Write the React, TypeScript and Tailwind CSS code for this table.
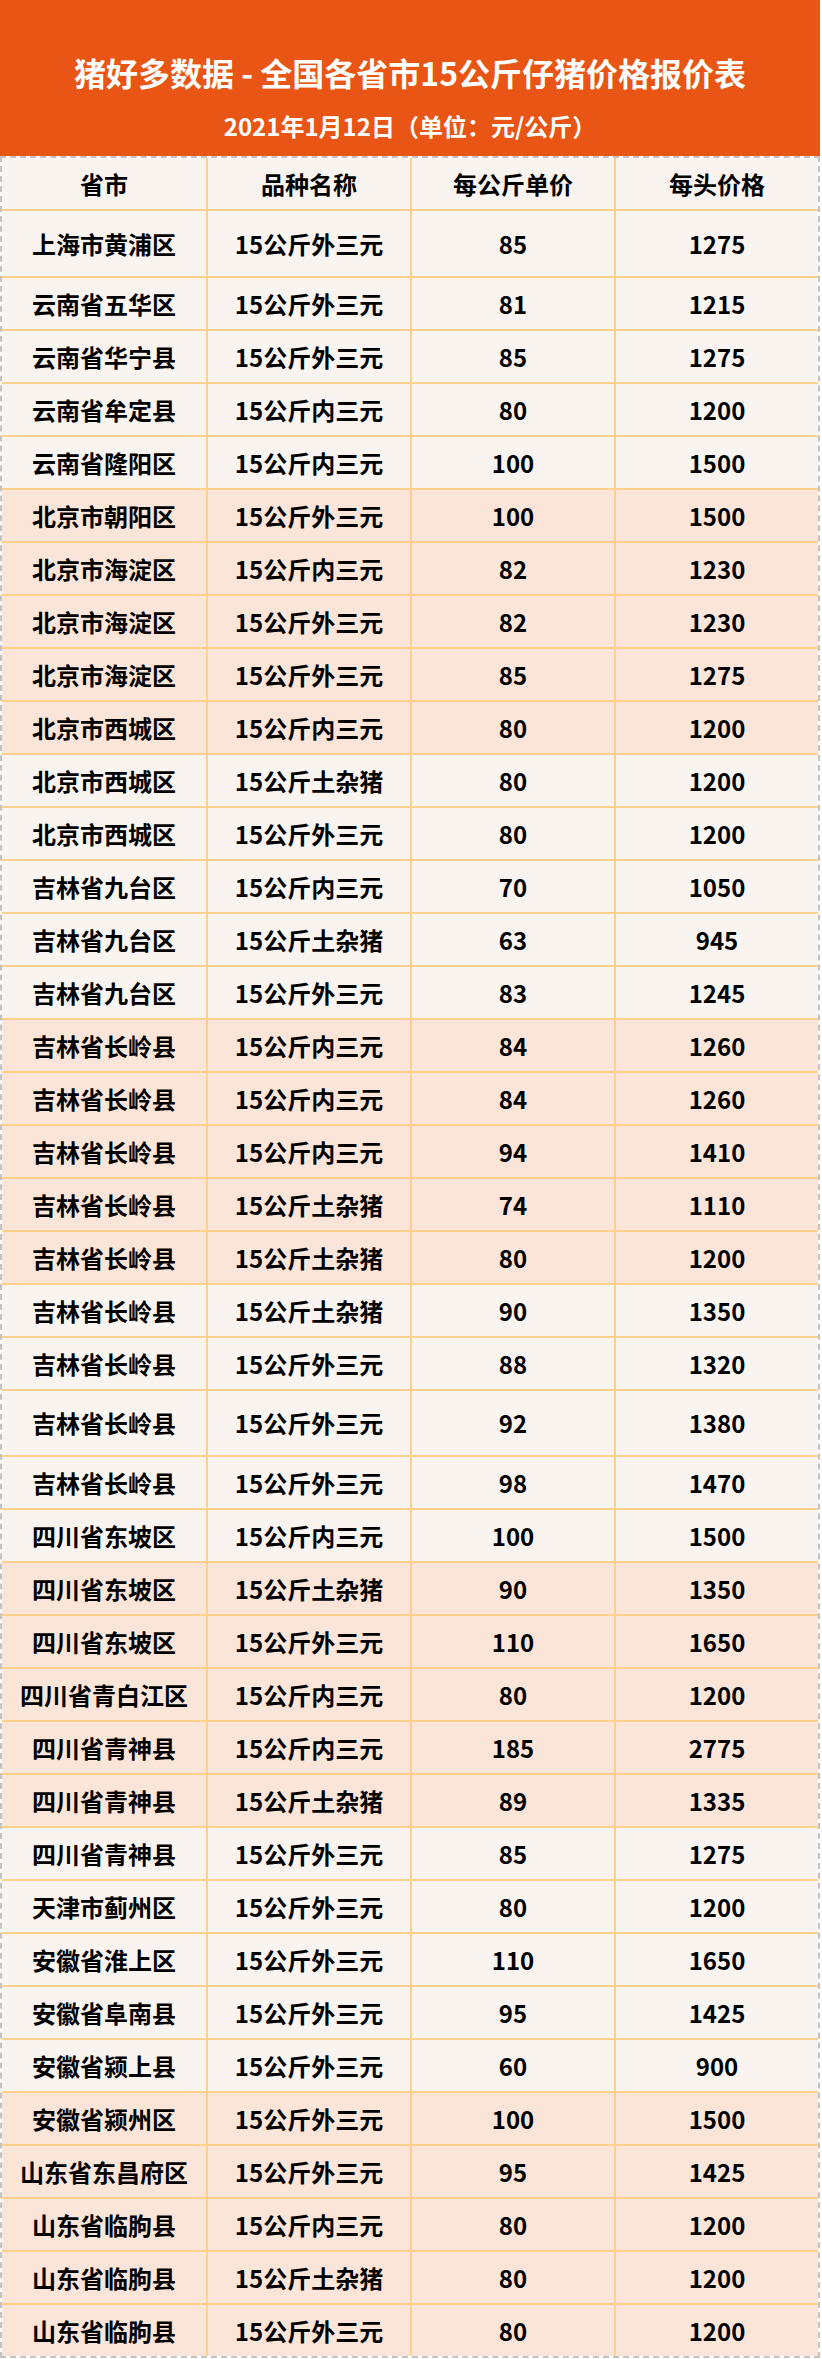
const rows: [string, string, string, string][] = [
  ["上海市黄浦区", "15公斤外三元", "85", "1275"],
  ["云南省五华区", "15公斤外三元", "81", "1215"],
  ["云南省华宁县", "15公斤外三元", "85", "1275"],
  ["云南省牟定县", "15公斤内三元", "80", "1200"],
  ["云南省隆阳区", "15公斤内三元", "100", "1500"],
  ["北京市朝阳区", "15公斤外三元", "100", "1500"],
  ["北京市海淀区", "15公斤内三元", "82", "1230"],
  ["北京市海淀区", "15公斤外三元", "82", "1230"],
  ["北京市海淀区", "15公斤外三元", "85", "1275"],
  ["北京市西城区", "15公斤内三元", "80", "1200"],
  ["北京市西城区", "15公斤土杂猪", "80", "1200"],
  ["北京市西城区", "15公斤外三元", "80", "1200"],
  ["吉林省九台区", "15公斤内三元", "70", "1050"],
  ["吉林省九台区", "15公斤土杂猪", "63", "945"],
  ["吉林省九台区", "15公斤外三元", "83", "1245"],
  ["吉林省长岭县", "15公斤内三元", "84", "1260"],
  ["吉林省长岭县", "15公斤内三元", "84", "1260"],
  ["吉林省长岭县", "15公斤内三元", "94", "1410"],
  ["吉林省长岭县", "15公斤土杂猪", "74", "1110"],
  ["吉林省长岭县", "15公斤土杂猪", "80", "1200"],
  ["吉林省长岭县", "15公斤土杂猪", "90", "1350"],
  ["吉林省长岭县", "15公斤外三元", "88", "1320"],
  ["吉林省长岭县", "15公斤外三元", "92", "1380"],
  ["吉林省长岭县", "15公斤外三元", "98", "1470"],
  ["四川省东坡区", "15公斤内三元", "100", "1500"],
  ["四川省东坡区", "15公斤土杂猪", "90", "1350"],
  ["四川省东坡区", "15公斤外三元", "110", "1650"],
  ["四川省青白江区", "15公斤内三元", "80", "1200"],
  ["四川省青神县", "15公斤内三元", "185", "2775"],
  ["四川省青神县", "15公斤土杂猪", "89", "1335"],
  ["四川省青神县", "15公斤外三元", "85", "1275"],
  ["天津市蓟州区", "15公斤外三元", "80", "1200"],
  ["安徽省淮上区", "15公斤外三元", "110", "1650"],
  ["安徽省阜南县", "15公斤外三元", "95", "1425"],
  ["安徽省颍上县", "15公斤外三元", "60", "900"],
  ["安徽省颍州区", "15公斤外三元", "100", "1500"],
  ["山东省东昌府区", "15公斤外三元", "95", "1425"],
  ["山东省临朐县", "15公斤内三元", "80", "1200"],
  ["山东省临朐县", "15公斤土杂猪", "80", "1200"],
  ["山东省临朐县", "15公斤外三元", "80", "1200"],
];

// blocks of five rows alternate cream / pink
function rowBg(i: number) {
  return Math.floor(i / 5) % 2 === 1 ? "bg-[#fbe4d8]" : "bg-[#f9f4f0]";
}

// a couple of rows in the source image are taller than the rest
function rowHeight(i: number) {
  if (i === 0) return "h-[67px]";
  if (i === 22) return "h-[66px]";
  return "h-[53px]";
}

function Cell({ children, first }: { children: React.ReactNode; first?: boolean }) {
  return (
    <div
      className={
        "flex items-center justify-center text-[24px] font-bold leading-none text-black " +
        (first ? "" : "border-l-2 border-[#fdd08b]")
      }
    >
      {children}
    </div>
  );
}

export default function App() {
  return (
    <div
      className="w-[822px] min-h-[2359px] bg-white"
      style={{ fontFamily: '"Noto Sans CJK SC", "Noto Sans", sans-serif' }}
    >
      <div className="w-[820px]">
        {/* Title band */}
        <div className="flex h-[156px] flex-col items-center bg-[#e85514] pt-[53px] text-white">
          <h1 className="text-[32px] font-bold leading-[38px]">
            猪好多数据 - 全国各省市15公斤仔猪价格报价表
          </h1>
          <p className="mt-[20px] text-[24px] font-bold leading-[30px] [text-spacing-trim:space-all]">
            2021年1月12日（单位：元/公斤）
          </p>
        </div>

        {/* Table */}
        <div className="border-2 border-dashed border-[#c3c3c3]">
          <div className="grid h-[51px] grid-cols-4 bg-[#f9f4f0]">
            <Cell first>省市</Cell>
            <Cell>品种名称</Cell>
            <Cell>每公斤单价</Cell>
            <Cell>每头价格</Cell>
          </div>
          {rows.map((r, i) => (
            <div
              key={i}
              className={`grid grid-cols-4 border-t-2 border-[#fdd08b] ${rowBg(i)} ${rowHeight(i)}`}
            >
              <Cell first>{r[0]}</Cell>
              <Cell>{r[1]}</Cell>
              <Cell>{r[2]}</Cell>
              <Cell>{r[3]}</Cell>
            </div>
          ))}
        </div>
      </div>
    </div>
  );
}
